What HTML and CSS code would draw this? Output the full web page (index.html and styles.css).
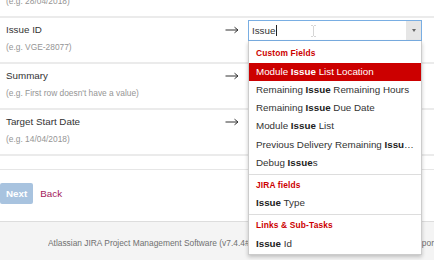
FILE: index.html
```html
<!DOCTYPE html>
<html>
<head>
<meta charset="utf-8">
<link rel="stylesheet" href="styles.css">
</head>
<body>
<div class="page">
  <div class="partial">
    <div class="hint">(e.g. 28/04/2018)</div>
  </div>

  <div class="row">
    <div class="field">
      <div class="label">Issue ID</div>
      <div class="hint">(e.g. VGE-28077)</div>
    </div>
    <div class="arrow"><svg width="14" height="8" viewBox="0 0 14 8"><path d="M0.5 4H13M9.5 1.2L13 4L9.5 6.8" fill="none" stroke="#333" stroke-width="1"/></svg></div>
    <div class="picker">
      <div class="input focused">
        <span class="value">Issue</span><span class="caret"></span>
        <svg class="ibeam" width="5" height="12" viewBox="0 0 5 12"><path d="M0 0.5H2M3 0.5H5M2.5 1V11M0 11.5H2M3 11.5H5" fill="none" stroke="#d6d6d6" stroke-width="1"/></svg>
        <span class="drop-btn"><span class="tri"></span></span>
      </div>
      <div class="menu">
        <div class="group">
          <div class="heading">Custom Fields</div>
          <div class="item active">Module <b>Issue</b> List Location</div>
          <div class="item">Remaining <b>Issue</b> Remaining Hours</div>
          <div class="item">Remaining <b>Issue</b> Due Date</div>
          <div class="item">Module <b>Issue</b> List</div>
          <div class="item">Previous Delivery Remaining <b>Issues</b> Count</div>
          <div class="item">Debug <b>Issue</b>s</div>
        </div>
        <div class="group">
          <div class="heading">JIRA fields</div>
          <div class="item"><b>Issue</b> Type</div>
        </div>
        <div class="group">
          <div class="heading">Links &amp; Sub-Tasks</div>
          <div class="item"><b>Issue</b> Id</div>
        </div>
      </div>
    </div>
  </div>

  <div class="row">
    <div class="field">
      <div class="label">Summary</div>
      <div class="hint">(e.g. First row doesn't have a value)</div>
    </div>
    <div class="arrow"><svg width="14" height="8" viewBox="0 0 14 8"><path d="M0.5 4H13M9.5 1.2L13 4L9.5 6.8" fill="none" stroke="#333" stroke-width="1"/></svg></div>
    <div class="picker"><div class="input"></div></div>
  </div>

  <div class="row">
    <div class="field">
      <div class="label">Target Start Date</div>
      <div class="hint">(e.g. 14/04/2018)</div>
    </div>
    <div class="arrow"><svg width="14" height="8" viewBox="0 0 14 8"><path d="M0.5 4H13M9.5 1.2L13 4L9.5 6.8" fill="none" stroke="#333" stroke-width="1"/></svg></div>
    <div class="picker"><div class="input"></div></div>
  </div>

  <div class="spacer"></div>

  <div class="buttons">
    <span class="btn-next">Next</span>
    <a class="back" href="#">Back</a>
  </div>

  <div class="footer">
    <span class="footer-main">Atlassian JIRA Project Management Software (v7.4.4#74004-sha1:0b8bd0f)</span>
    <span class="footer-link">· Report a problem</span>
  </div>
</div>
</body>
</html>
```

FILE: styles.css
```css
* { box-sizing: border-box; }

html, body {
  margin: 0;
  padding: 0;
  background: #ffffff;
}

body {
  font-family: "Liberation Sans", Arial, sans-serif;
  font-size: 9.8px;
  color: #333333;
  width: 434px;
  height: 260px;
  overflow: hidden;
}

.page {
  display: flex;
  flex-direction: column;
}

.partial {
  margin-top: -6px;
  padding: 0 12px 8px 6px;
}

.hint {
  font-size: 8.4px;
  line-height: 14px;
  color: #959595;
}

.row {
  display: grid;
  grid-template-columns: 1fr 23px 174px;
  align-items: start;
  border-top: 2px solid #ebebeb;
  padding: 2px 12px 8px 6px;
}

.field {
  padding-top: 3px;
}

.label {
  line-height: 14px;
  color: #333333;
}

.field .hint {
  margin-top: 3px;
}

.arrow {
  padding-top: 6px;
  display: flex;
}

.arrow svg {
  display: block;
}

.picker {
  position: relative;
}

.input {
  height: 21px;
  border: 1px solid #cccccc;
  background: #ffffff;
  display: flex;
  align-items: center;
  padding-left: 3px;
  position: relative;
}

.input.focused {
  border-color: #79aee3;
}

.value {
  line-height: 14px;
  color: #333333;
}

.caret {
  width: 1px;
  height: 11px;
  background: #222222;
  margin-left: 0.5px;
}

.ibeam {
  position: absolute;
  left: 62px;
  top: 4px;
}

.drop-btn {
  position: absolute;
  right: 0;
  top: 0;
  bottom: 0;
  width: 15px;
  background: #e6e6e6;
  display: flex;
  align-items: center;
  justify-content: center;
}

.tri {
  width: 0;
  height: 0;
  border-left: 2.5px solid transparent;
  border-right: 2.5px solid transparent;
  border-top: 3px solid #666666;
}

.menu {
  position: absolute;
  left: 0;
  top: 21px;
  width: 174px;
  background: #ffffff;
  border: 1px solid #cccccc;
  border-top: none;
  box-shadow: 0 2px 4px rgba(0, 0, 0, 0.22);
  z-index: 10;
}

.group {
  padding-bottom: 1.5px;
}

.group + .group {
  border-top: 1px solid #dddddd;
}

.heading {
  font-size: 8.4px;
  font-weight: bold;
  color: #cc0000;
  line-height: 14px;
  padding: 3px 7px 2.5px;
  letter-spacing: 0.15px;
}

.group:first-child .heading {
  padding-top: 5px;
}

.item {
  line-height: 14.3px;
  padding: 2px 7px;
  color: #333333;
  white-space: nowrap;
  overflow: hidden;
  text-overflow: ellipsis;
}

.item b {
  color: #222222;
}

.item.active {
  background: #cc0000;
  color: #ffffff;
}

.item.active b {
  color: #ffffff;
}

.spacer {
  height: 15px;
  border-top: 2px solid #ebebeb;
}

.buttons {
  border-top: 1px solid #e6e6e6;
  padding: 13px 0 17px 0;
  display: flex;
  align-items: center;
  gap: 7px;
}

.btn-next {
  display: inline-block;
  height: 21px;
  line-height: 21px;
  padding: 0 6px;
  background: #a8c3df;
  color: #ffffff;
  font-weight: bold;
  border-radius: 2px;
}

.back {
  color: #a3195b;
  text-decoration: none;
}

.footer {
  border-top: 1px solid #dddddd;
  background: #f4f4f4;
  height: 60px;
  display: flex;
  padding: 14px 0 0 48px;
  font-size: 8.4px;
  line-height: 14px;
  color: #707070;
  white-space: nowrap;
}

.footer-main {
  width: 358px;
  overflow: hidden;
  flex: none;
}

.footer-link {
  flex: none;
}
```
